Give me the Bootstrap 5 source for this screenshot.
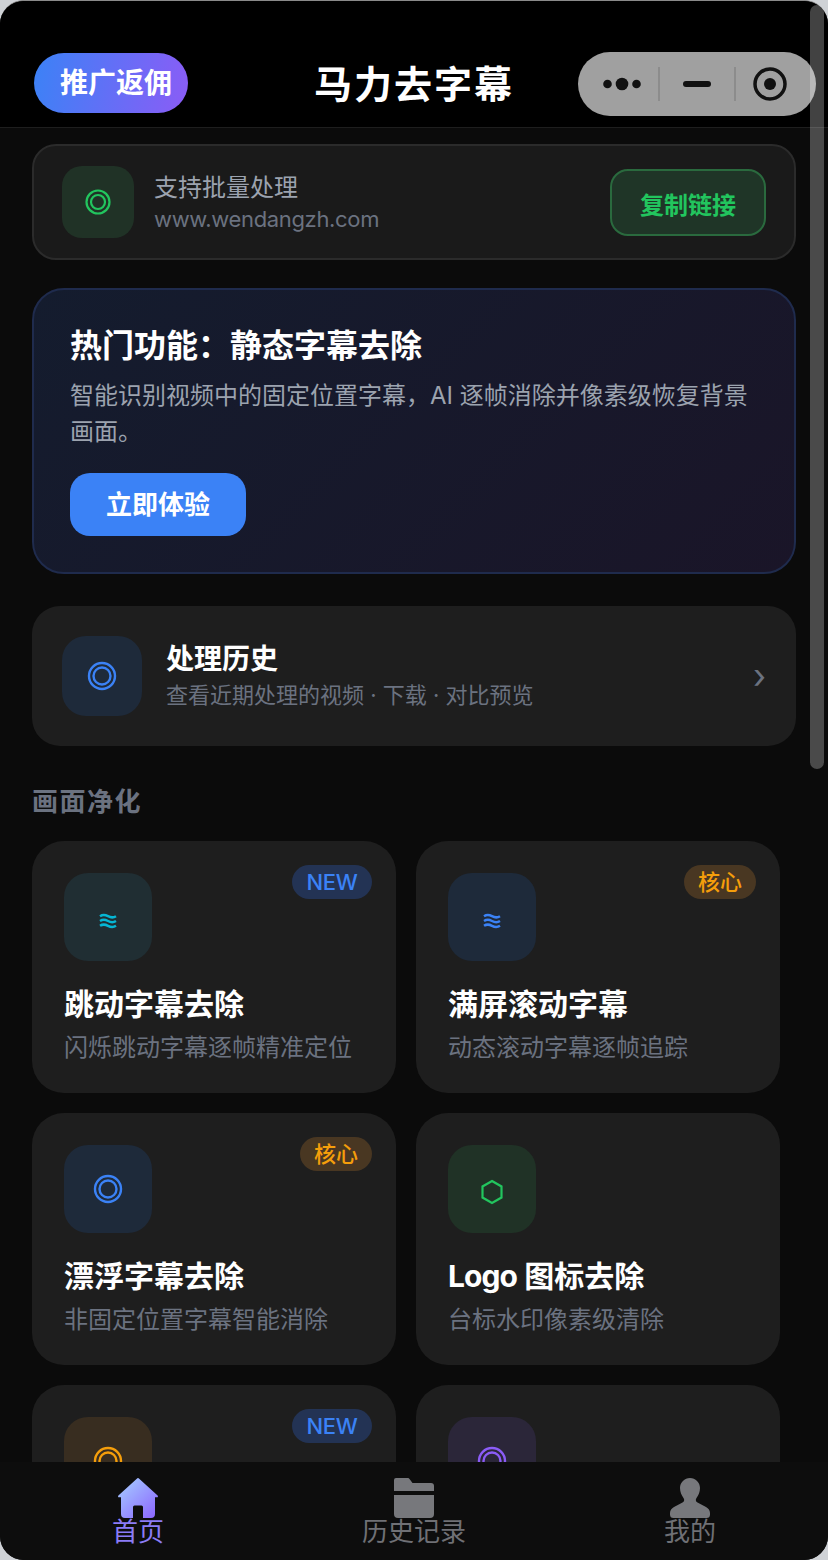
<!DOCTYPE html>
<html lang="zh-CN">
<head>
<meta charset="utf-8">
<title>马力去字幕</title>
<link rel="stylesheet" href="https://cdn.jsdelivr.net/npm/bootstrap@5.3.0/dist/css/bootstrap.min.css">
<style>
html,body{margin:0;height:1560px;background:#cfd2d6;overflow:hidden}
body{font-family:Inter,"Noto Sans CJK SC","Noto Sans",sans-serif;color:#fff}
.shell{width:828px;height:1560px;border-radius:24px;overflow:hidden;background:#0b0b0b;border-top:1px solid #8a8a8a;position:relative}
.topbar{height:127px;flex:none;background:#000;border-bottom:1px solid #1e1e1e;position:relative;padding-top:52px}
.promo{position:absolute;left:34px;top:52px;width:154px;height:60px;padding-left:10px;border-radius:30px;background:linear-gradient(100deg,#3b82f6,#8b5cf6);font-size:28px;font-weight:700}
.apptitle{font-size:38px;font-weight:700;line-height:62px;letter-spacing:2px;text-align:center;margin:0}
.capsule{position:absolute;left:578px;top:51px;width:238px;height:64px;border-radius:32px;background:#a0a0a0}
.cap-sep{width:2px;height:34px;background:#8c8c8c;flex:none}
.cap-a{width:80px;padding-left:8px}
.cap-b{width:74px}
.cap-c{width:80px;padding-right:12px}
.scrollthumb{position:absolute;left:810px;top:4px;width:14px;height:764px;border-radius:7px;background:rgba(255,255,255,.26)}
.content{flex:1;min-height:0;overflow:hidden;padding:16px 32px 0}
.linkbox{height:116px;width:764px;border:2px solid #2b2b2b;border-radius:24px;background:#1a1a1a;padding:20px 28px;gap:20px}
.tile{flex:none}
.tile-72{width:72px;height:72px;border-radius:20px}
.tile-80{width:80px;height:80px;border-radius:24px}
.tile-88{width:88px;height:88px;border-radius:24px}
.tone-green{background:#203226}
.tone-blue{background:#1e2a3a}
.tone-cyan{background:#202e33}
.tone-orange{background:#382d20}
.tone-purple{background:#2b2639}
.glyph-wave{margin-top:8px}
.glyph-hex{margin-top:6px}
.link-a{font-size:24px;line-height:34px;color:#9ca3af;padding-top:1px}
.link-b{font-size:22px;line-height:30px;color:#6b7280;letter-spacing:-.35px;margin-top:-1px}
.copybtn{width:156px;height:67px;border:2px solid #2a6a3e;border-radius:18px;background:#1f3527;color:#22c55e;font-size:24px;font-weight:700;padding:8px 0 0}
.copybtn:hover{background:#1f3527;color:#22c55e;border-color:#2a6a3e}
.hero{width:764px;height:286px;margin-top:28px;border:2px solid #1f2b4d;border-radius:32px;background:linear-gradient(135deg,#141c2e,#1a1528);padding:36px}
.hero-t{font-size:32px;line-height:38px;font-weight:700;margin:0 0 13px;padding-top:1px}
.hero-d{font-size:24px;line-height:36px;color:#9ca3af;margin:0 0 23px}
.herobtn{width:176px;height:63px;border:0;border-radius:20px;background:#3b82f6;color:#fff;font-size:26px;font-weight:700;padding:0}
.herobtn:hover{background:#3b82f6;color:#fff}
.histrow{width:764px;height:140px;margin-top:32px;border-radius:28px;background:#1e1e1e;padding:30px;gap:24px}
.hist-t{font-size:28px;line-height:38px;font-weight:700;padding-top:2px}
.hist-d{font-size:22px;line-height:34px;color:#6b7280;padding-bottom:2px}
.chev{font-size:34px;line-height:36px;color:#6b7280}
.sect{font-size:26px;line-height:36px;font-weight:700;color:#6b7280;letter-spacing:1.5px;margin:38px 0 21px}
.cardgrid{display:grid;grid-template-columns:364px 364px;gap:20px}
.fcard{position:relative;min-height:252px;border-radius:32px;background:#1e1e1e;padding:32px 32px 28px}
.fcard-t{font-size:30px;line-height:40px;font-weight:700;margin-top:23px}
.tight-latin{letter-spacing:-.9px}
.fcard-d{font-size:24px;line-height:34px;color:#6b7280;margin-top:7px}
.tag{position:absolute;top:24px;right:24px;height:34px;padding:0 14px;border-radius:17px;font-size:22px;font-weight:500;line-height:34px}
.tag-new{background:#233354;color:#3b82f6;letter-spacing:-.3px;padding:0 14.500px}
.tag-core{background:#493722;color:#f59e0b}
.tabbar{height:98px;flex:none;background:#0d0d0d;padding-top:16px}
.tabcell{width:276px;height:74px}
.tabcell svg{display:block}
.tablabel{font-size:26px;line-height:30px;margin-top:-1px;color:#6f7075}
.tablabel-on{color:#8b7cf6}
</style>
</head>
<body>
<div class="shell d-flex flex-column">
  <header class="topbar">
    <div class="promo d-flex align-items-center justify-content-center">推广返佣</div>
    <h1 class="apptitle">马力去字幕</h1>
  </header>

  <main class="content">
    <section class="linkbox d-flex align-items-center">
      <div class="tile tile-72 tone-green d-flex align-items-center justify-content-center">
        <svg width="26" height="26" viewBox="0 0 26 26" fill="none" stroke="#22c55e" stroke-width="2.2"><circle cx="13" cy="13" r="11.500"/><circle cx="13" cy="13" r="7"/></svg>
      </div>
      <div class="flex-grow-1">
        <div class="link-a">支持批量处理</div>
        <div class="link-b">www.wendangzh.com</div>
      </div>
      <button class="btn copybtn" type="button">复制链接</button>
    </section>

    <section class="hero">
      <h2 class="hero-t">热门功能：静态字幕去除</h2>
      <p class="hero-d">智能识别视频中的固定位置字幕，AI 逐帧消除并像素级恢复背景画面。</p>
      <button class="btn herobtn" type="button">立即体验</button>
    </section>

    <section class="histrow d-flex align-items-center">
      <div class="tile tile-80 tone-blue d-flex align-items-center justify-content-center">
        <svg width="30" height="30" viewBox="0 0 30 30" fill="none" stroke="#3b82f6" stroke-width="2.4"><circle cx="15" cy="15" r="13"/><circle cx="15" cy="15" r="8.500"/></svg>
      </div>
      <div class="flex-grow-1">
        <div class="hist-t">处理历史</div>
        <div class="hist-d">查看近期处理的视频 · 下载 · 对比预览</div>
      </div>
      <div class="chev">›</div>
    </section>

    <h3 class="sect">画面净化</h3>

    <div class="cardgrid">
      <article class="fcard">
        <span class="tag tag-new">NEW</span>
        <div class="tile tile-88 tone-cyan d-flex align-items-center justify-content-center">
          <svg class="glyph-wave" width="18" height="16" viewBox="0 0 18 16" fill="none" stroke="#06b6d4" stroke-width="2.5"><path d="M1 3.200c2.500-1.600 5-1.600 8 0s5.500 1.600 8 0M1 8c2.500-1.600 5-1.600 8 0s5.500 1.600 8 0M1 12.800c2.500-1.600 5-1.600 8 0s5.500 1.600 8 0"/></svg>
        </div>
        <div class="fcard-t">跳动字幕去除</div>
        <div class="fcard-d">闪烁跳动字幕逐帧精准定位</div>
      </article>
      <article class="fcard">
        <span class="tag tag-core">核心</span>
        <div class="tile tile-88 tone-blue d-flex align-items-center justify-content-center">
          <svg class="glyph-wave" width="18" height="16" viewBox="0 0 18 16" fill="none" stroke="#3b82f6" stroke-width="2.5"><path d="M1 3.200c2.500-1.600 5-1.600 8 0s5.500 1.600 8 0M1 8c2.500-1.600 5-1.600 8 0s5.500 1.600 8 0M1 12.800c2.500-1.600 5-1.600 8 0s5.500 1.600 8 0"/></svg>
        </div>
        <div class="fcard-t">满屏滚动字幕</div>
        <div class="fcard-d">动态滚动字幕逐帧追踪</div>
      </article>
      <article class="fcard">
        <span class="tag tag-core">核心</span>
        <div class="tile tile-88 tone-blue d-flex align-items-center justify-content-center">
          <svg width="30" height="30" viewBox="0 0 30 30" fill="none" stroke="#3b82f6" stroke-width="2.4"><circle cx="15" cy="15" r="13"/><circle cx="15" cy="15" r="8.500"/></svg>
        </div>
        <div class="fcard-t">漂浮字幕去除</div>
        <div class="fcard-d">非固定位置字幕智能消除</div>
      </article>
      <article class="fcard">
        <div class="tile tile-88 tone-green d-flex align-items-center justify-content-center">
          <svg class="glyph-hex" width="24" height="26" viewBox="0 0 24 26" fill="none" stroke="#22c55e" stroke-width="2.2"><path d="M12 2l9.500 5.500v11L12 24l-9.500-5.500v-11z"/></svg>
        </div>
        <div class="fcard-t"><span class="tight-latin">Logo</span> 图标去除</div>
        <div class="fcard-d">台标水印像素级清除</div>
      </article>
      <article class="fcard">
        <span class="tag tag-new">NEW</span>
        <div class="tile tile-88 tone-orange d-flex align-items-center justify-content-center">
          <svg width="30" height="30" viewBox="0 0 30 30" fill="none" stroke="#f59e0b" stroke-width="2.4"><circle cx="15" cy="15" r="13"/><circle cx="15" cy="15" r="8.500"/></svg>
        </div>
      </article>
      <article class="fcard">
        <div class="tile tile-88 tone-purple d-flex align-items-center justify-content-center">
          <svg width="30" height="30" viewBox="0 0 30 30" fill="none" stroke="#8b5cf6" stroke-width="2.4"><circle cx="15" cy="15" r="13"/><circle cx="15" cy="15" r="8.500"/></svg>
        </div>
      </article>
    </div>
  </main>

  <nav class="tabbar d-flex justify-content-center">
    <div class="tabcell d-flex flex-column align-items-center">
      <svg width="40" height="40" viewBox="0 0 40 40"><defs><linearGradient id="homegrad" x1="0" y1="0" x2="1" y2="1"><stop offset="0" stop-color="#a6d2ff"/><stop offset="1" stop-color="#8b62ff"/></linearGradient></defs><path fill="url(#homegrad)" d="M18.800.8a1.500 1.500 0 0 1 2.400 0L39.600 17.600c.7.700.3 1.700-.7 1.700H37V36a4 4 0 0 1-4 4h-8V29a1.500 1.500 0 0 0-1.500-1.500h-7A1.500 1.500 0 0 0 15 29v11H7a4 4 0 0 1-4-4V19.300H1.100c-1 0-1.400-1-.7-1.700z"/></svg>
      <div class="tablabel tablabel-on">首页</div>
    </div>
    <div class="tabcell d-flex flex-column align-items-center">
      <svg width="40" height="40" viewBox="0 0 40 40" fill="#77787c"><path d="M0 13V2a2 2 0 0 1 2-2h11.500c1 0 1.700.5 2.200 1.300L18.500 5H37a3 3 0 0 1 3 3v5z"/><path d="M0 17h40v19a4 4 0 0 1-4 4H4a4 4 0 0 1-4-4z"/></svg>
      <div class="tablabel">历史记录</div>
    </div>
    <div class="tabcell d-flex flex-column align-items-center">
      <svg width="40" height="40" viewBox="0 0 40 40" fill="#77787c"><path d="M20 0c5.500 0 10 4.500 10 10 0 4-1.500 7-3.500 10-1.200 1.800-.8 3.500 1 4.500l8.500 4.500c2.500 1.300 4 3.500 4 6v1.500a3.500 3.500 0 0 1-3.500 3.500h-33A3.500 3.500 0 0 1 0 36.500V35c0-2.500 1.500-4.700 4-6l8.500-4.500c1.800-1 2.200-2.700 1-4.500C11.500 17 10 14 10 10 10 4.500 14.500 0 20 0z"/></svg>
      <div class="tablabel">我的</div>
    </div>
  </nav>

  <div class="capsule d-flex align-items-center">
    <div class="cap-a d-flex justify-content-center align-items-center">
      <svg width="38" height="14" viewBox="0 0 38 14" fill="#111"><circle cx="4.500" cy="7" r="4.300"/><circle cx="19" cy="7" r="6.300"/><circle cx="33.500" cy="7" r="4.300"/></svg>
    </div>
    <div class="cap-sep"></div>
    <div class="cap-b d-flex justify-content-center">
      <svg width="28" height="6" viewBox="0 0 28 6" fill="#111"><rect width="28" height="6" rx="3"/></svg>
    </div>
    <div class="cap-sep"></div>
    <div class="cap-c d-flex justify-content-center">
      <svg width="34" height="34" viewBox="0 0 34 34"><circle cx="17" cy="17" r="15" fill="none" stroke="#111" stroke-width="3.500"/><circle cx="17" cy="17" r="6" fill="#111"/></svg>
    </div>
  </div>
  <div class="scrollthumb"></div>
</div>
<script src="https://cdn.jsdelivr.net/npm/bootstrap@5.3.0/dist/js/bootstrap.bundle.min.js"></script>
</body>
</html>
